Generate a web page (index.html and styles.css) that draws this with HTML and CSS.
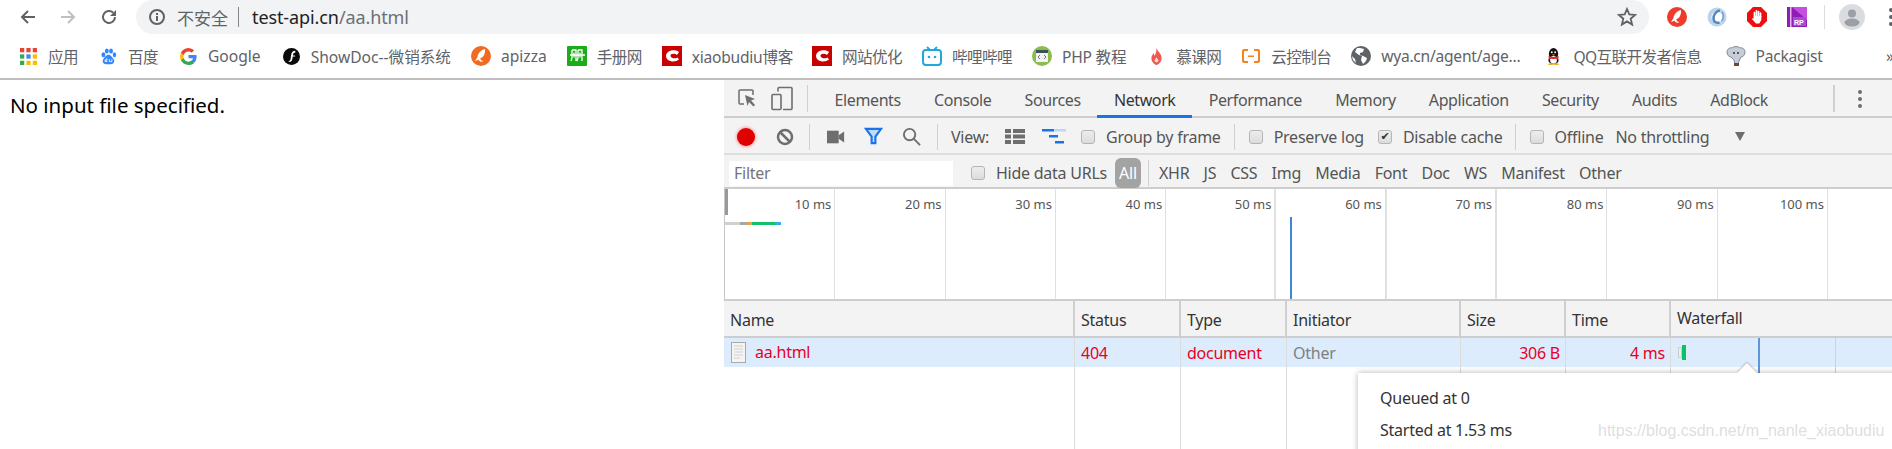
FILE: index.html
```html
<!DOCTYPE html>
<html lang="zh">
<head>
<meta charset="utf-8">
<title>aa.html</title>
<link rel="stylesheet" href="styles.css">
</head>
<body>
<header class="chrome">
  <div class="navbar">
    <svg class="nav-ic nav-back" viewBox="0 0 18 18"><path d="M16 9H3M9 3 3 9l6 6" fill="none" stroke="#5f6368" stroke-width="2"/></svg>
    <svg class="nav-ic nav-fwd" viewBox="0 0 18 18"><path d="M2 9h13M9 3l6 6-6 6" fill="none" stroke="#bdc1c6" stroke-width="2"/></svg>
    <svg class="nav-ic nav-reload" viewBox="0 0 18 18"><path d="M15 9a6 6 0 1 1-1.800-4.300" fill="none" stroke="#5f6368" stroke-width="2"/><path d="M16 2v6h-6z" fill="#5f6368"/></svg>
    <div class="omnibox">
      <svg class="info" viewBox="0 0 18 18"><circle cx="9" cy="9" r="7" fill="none" stroke="#5f6368" stroke-width="2"/><path d="M9 8v5M9 5v2" stroke="#5f6368" stroke-width="2"/></svg>
      <span class="insecure">不安全</span><span class="omni-sep"></span>
      <span class="url"><b>test-api.cn</b>/aa.html</span>
      <svg class="star" viewBox="0 0 20 20"><path d="m10 2 2.300 5.400 5.900.5-4.500 3.800 1.400 5.800-5.100-3.100-5.100 3.100 1.400-5.800L1.800 7.900l5.900-.5z" fill="none" stroke="#5f6368" stroke-width="1.800"/></svg>
    </div>
    <div class="exts">
      <svg class="ext" viewBox="0 0 20 20"><circle cx="10" cy="10" r="10" fill="#ee3b2b"/><path d="M14 3c-4 1-7 4-7.500 8L4 15l3.500-1.200c1 1.700 3 2.700 5 1.200-2 0-3.200-1-3.200-3 3 0 5.200-4.500 4.700-9z" fill="#fff"/></svg>
      <svg class="ext" viewBox="0 0 20 20"><circle cx="10" cy="10" r="7.500" fill="none" stroke="#bcd3ea" stroke-width="4"/><path d="M13 3.500C9 4 6 8 6.500 12c.4 3 3 4.500 6 3.500" fill="none" stroke="#4f88c4" stroke-width="2.500"/><path d="M15 5c2 3 1.500 7-.5 9" fill="none" stroke="#6d9fd1" stroke-width="1.500"/></svg>
      <svg class="ext" viewBox="0 0 20 20"><path d="M6 0h8l6 6v8l-6 6H6l-6-6V6z" fill="#ee0e0e"/><path d="M7.500 10V5.500M9.500 10V3.800M11.500 10V4.500M13.500 10V6" stroke="#fff" stroke-width="1.700" stroke-linecap="round"/><path d="M6.700 9h7.600v4l-2 3.500H9L5 12l1-1 .7.5z" fill="#fff"/></svg>
      <svg class="ext" viewBox="0 0 20 20"><path d="M0 0h20v20H0z" fill="#8e1cb5"/><path d="M5 0h15v13z" fill="#c44fe0"/><path d="M3 0h1.500v20H3z" fill="#e6b5f2"/><rect x="6" y="10" width="13" height="9" fill="#a94ad0"/><text x="7" y="18" class="rp">RP</text></svg>
      <span class="ext-sep"></span>
      <svg class="avatar" viewBox="0 0 26 26"><circle cx="13" cy="13" r="13" fill="#dadce0"/><circle cx="13" cy="9.500" r="4" fill="#9aa0a6"/><ellipse cx="13" cy="18.500" rx="7.500" ry="4" fill="#9aa0a6"/></svg>
      <svg class="menu" viewBox="0 0 4 20"><circle cx="2" cy="3" r="2" fill="#5f6368"/><circle cx="2" cy="10" r="2" fill="#5f6368"/><circle cx="2" cy="17" r="2" fill="#5f6368"/></svg>
    </div>
  </div>
  <nav class="bookmarks">
    <a class="bm bm-s bm-zh"><svg class="bi" viewBox="0 0 16 16"><g><rect x="0" y="0" width="4" height="4" fill="#ea4335"/><rect x="6" y="0" width="4" height="4" fill="#ea4335"/><rect x="12" y="0" width="4" height="4" fill="#ea4335"/><rect x="0" y="6" width="4" height="4" fill="#34a853"/><rect x="6" y="6" width="4" height="4" fill="#4285f4"/><rect x="12" y="6" width="4" height="4" fill="#fbbc05"/><rect x="0" y="12" width="4" height="4" fill="#34a853"/><rect x="6" y="12" width="4" height="4" fill="#fbbc05"/><rect x="12" y="12" width="4" height="4" fill="#fbbc05"/></g></svg>应用</a>
    <a class="bm bm-s bm-zh"><svg class="bi" viewBox="0 0 18 20"><g fill="#3385ff"><ellipse cx="3" cy="8" rx="2.300" ry="3"/><ellipse cx="7" cy="3.500" rx="2.300" ry="3"/><ellipse cx="12" cy="3.500" rx="2.300" ry="3"/><ellipse cx="16" cy="8" rx="2" ry="3"/><path d="M9 8c3 0 4 3 6 5 2 3 0 6-3 6H6c-3 0-5-3-3-6 2-2 3-5 6-5z"/></g><path d="M7 12v4H5v-2h2M10 13v3h3v-3" fill="none" stroke="#fff" stroke-width="1"/></svg>百度</a>
    <a class="bm bm-s"><svg class="bi" viewBox="0 0 18 18"><path d="M17.600 9.200c0-.6-.1-1.200-.2-1.800H9v3.400h4.800a4 4 0 0 1-1.800 2.700v2.200h2.900c1.700-1.600 2.700-3.900 2.700-6.500z" fill="#4285f4"/><path d="M9 18c2.400 0 4.500-.8 5.900-2.200L12 13.600c-.8.500-1.800.9-3 .9-2.300 0-4.300-1.600-5-3.700H1v2.300A9 9 0 0 0 9 18z" fill="#34a853"/><path d="M4 10.700a5.400 5.400 0 0 1 0-3.400V5H1a9 9 0 0 0 0 8z" fill="#fbbc05"/><path d="M9 3.600c1.300 0 2.500.5 3.400 1.300L15 2.400A9 9 0 0 0 1 5l3 2.300c.7-2.100 2.700-3.700 5-3.700z" fill="#ea4335"/></svg>Google</a>
    <a class="bm bm-s"><svg class="bi" viewBox="0 0 18 18"><circle cx="9" cy="9" r="9" fill="#0a0a0a"/><path d="M13 3c-3 0-4 2-4.500 5L8 12c-.3 1-1 2-2.500 2 2 1.500 4 .5 4.500-3l.3-2H13l-.5-1h-2l.3-1.500c.1-1 .8-1.500 2.200-1.500z" fill="#fff"/></svg>ShowDoc--微销系统</a>
    <a class="bm bm-l"><svg class="bi-l" viewBox="0 0 20 20"><circle cx="10" cy="10" r="10" fill="#f26a21"/><path d="M14 3c-4 1-7 4-7.500 8L4 15l3.500-1.200c1 1.700 3 2.700 5 1.200-2 0-3.200-1-3.200-3 3 0 5.200-4.500 4.700-9z" fill="#fff"/></svg>apizza</a>
    <a class="bm bm-l bm-zh"><svg class="bi-l" viewBox="0 0 20 20"><rect width="20" height="20" rx="1" fill="#1aad19"/><path d="M5 4h4v11M5 4v8l-1 3M11 4h4v11M11 4v8l-1 3M3 9h15M7 6.500v5M13 6.500v5" fill="none" stroke="#fff" stroke-width="1.300"/></svg>手册网</a>
    <a class="bm bm-l bm-t"><svg class="bi-l" viewBox="0 0 20 20"><rect width="20" height="20" fill="#c90000"/><path d="M17 6C14 3 5 3.500 4 9.500 4 16 13 17 17 13.500l-1.500-2c-2 1.500-6.500 1-7-1.500-.5-2.500 4.500-3 6.500-1z" fill="#fff"/></svg>xiaobudiu博客</a>
    <a class="bm bm-l bm-zh bm-x"><svg class="bi-l" viewBox="0 0 20 20"><rect width="20" height="20" fill="#c90000"/><path d="M17 6C14 3 5 3.500 4 9.500 4 16 13 17 17 13.500l-1.500-2c-2 1.500-6.500 1-7-1.500-.5-2.500 4.500-3 6.500-1z" fill="#fff"/></svg>网站优化</a>
    <a class="bm bm-l bm-zh"><svg class="bi-l" viewBox="0 0 20 20"><path d="M5 1l3 3M15 1l-3 3" stroke="#21a7dc" stroke-width="1.800"/><rect x="1" y="4" width="18" height="15" rx="3" fill="none" stroke="#21a7dc" stroke-width="2"/><circle cx="7" cy="11" r="1.300" fill="#21a7dc"/><circle cx="13" cy="11" r="1.300" fill="#21a7dc"/></svg>哔哩哔哩</a>
    <a class="bm bm-l bm-t"><svg class="bi-l" viewBox="0 0 20 20"><circle cx="10" cy="10" r="10" fill="#8dbb4c"/><rect x="4" y="4" width="12" height="12" fill="#f2f2f2"/><rect x="4" y="4" width="12" height="3" fill="#39505f"/><path d="m8 9-2 2 2 2m4-4 2 2-2 2" fill="none" stroke="#777" stroke-width="1"/></svg>PHP 教程</a>
    <a class="bm bm-s bm-zh"><svg class="bi" viewBox="0 0 16 20"><path d="M8 0c1 4 6 6 6 12 0 4-3 7-6 8-3-1-6-4-6-8 0-3 2-4 2-6 1 1 1 2 2 3 1-2 2-5 2-9z" fill="#ef5a50"/><path d="M8 11c1 2 3 3 2 5-1 1-3 1-4 0-1-2 1-3 2-5z" fill="#fbdcd8"/></svg>慕课网</a>
    <a class="bm bm-l bm-zh"><svg class="bi-l" viewBox="0 0 20 20"><path d="M7 3H3a2 2 0 0 0-2 2v10c0 1 1 2 2 2h4v-2H4a1 1 0 0 1-1-1V6a1 1 0 0 1 1-1h3zM13 3h4a2 2 0 0 1 2 2v10c0 1-1 2-2 2h-4v-2h3a1 1 0 0 0 1-1V6a1 1 0 0 0-1-1h-3zM7 9.500h6v1.500H7z" fill="#f5811f"/></svg>云控制台</a>
    <a class="bm bm-l bm-t"><svg class="bi-l" viewBox="0 0 20 20"><circle cx="10" cy="10" r="10" fill="#5f6368"/><path d="M6 2 4 6l4 3 3 1-1 4 2 4 3-3 1-3-4-2-3-1 0-2 3-1 1-3-4-1zM1 10l3 3 1 4-3-3z" fill="#fff"/></svg>wya.cn/agent/age...</a>
    <a class="bm bm-zh bm-qq"><svg class="bi" viewBox="0 0 16 20"><ellipse cx="8" cy="7" rx="5.500" ry="7" fill="#111"/><ellipse cx="8" cy="14" rx="6" ry="5" fill="#111"/><ellipse cx="8" cy="14" rx="4" ry="4.500" fill="#fff"/><path d="M2 9.500c4 1.500 8 1.500 12 0v2l-1 .5 0 2-2-1.500c-2 .5-4 .5-6 0l-2 1z" fill="#e32a26"/><circle cx="6" cy="5" r="1.100" fill="#fff"/><circle cx="10" cy="5" r="1.100" fill="#fff"/><path d="M6 7.500h4l-2 1.500z" fill="#f2b01e"/><ellipse cx="4.500" cy="19" rx="3" ry="1" fill="#f2b01e"/><ellipse cx="11.500" cy="19" rx="3" ry="1" fill="#f2b01e"/></svg>QQ互联开发者信息</a>
    <a class="bm bm-l bm-t bm-pk"><svg class="bi-l" viewBox="0 0 20 20"><path d="M1 6c0-3 3-5 5-4 2-2 6-2 8 0 2-1 5 1 5 4s-2 5-4 5l-2 4-1 3H9l-1-4-3-3C3 11 1 9 1 6z" fill="#c6ccd8" stroke="#6d7382" stroke-width=".8"/><circle cx="8" cy="7" r="1" fill="#333"/><circle cx="12" cy="7" r="1" fill="#333"/><path d="M8 17h5v3H8z" fill="#6b4a2b"/></svg>Packagist</a>
    <span class="more">»</span>
  </nav>
</header>
<main class="body">
  <section class="page"><p class="msg">No input file specified.</p></section>
  <section class="devtools">
    <div class="tabs">
      <svg class="dt-ic dt-inspect" viewBox="0 0 20 20"><path d="M7 16H3a1 1 0 0 1-1-1V3a1 1 0 0 1 1-1h12a1 1 0 0 1 1 1v4" fill="none" stroke="#6e6e6e" stroke-width="1.500"/><path d="m8 7 10 4-4 1.500 4 4.500-1.500 1.500L12 14l-1.500 4z" fill="#6e6e6e"/></svg>
      <svg class="dt-ic dt-device" viewBox="0 0 22 24"><path d="M7 5V2a1 1 0 0 1 1-1h12a1 1 0 0 1 1 1v20a1 1 0 0 1-1 1H12" fill="none" stroke="#6e6e6e" stroke-width="1.600"/><rect x="1" y="8" width="9" height="15" rx="1" fill="none" stroke="#6e6e6e" stroke-width="1.600"/></svg>
      <span class="vsep vsep-tabs"></span>
      <span class="tab">Elements</span><span class="tab">Console</span><span class="tab">Sources</span><span class="tab tab-on">Network</span><span class="tab">Performance</span><span class="tab">Memory</span><span class="tab">Application</span><span class="tab">Security</span><span class="tab">Audits</span><span class="tab">AdBlock</span>
      <span class="vsep vsep-end"></span>
      <svg class="dt-more" viewBox="0 0 4 20"><circle cx="2" cy="3" r="2" fill="#6e6e6e"/><circle cx="2" cy="10" r="2" fill="#6e6e6e"/><circle cx="2" cy="17" r="2" fill="#6e6e6e"/></svg>
    </div>
    <div class="bar">
      <span class="rec"></span>
      <svg class="b-clear" viewBox="0 0 18 18"><circle cx="9" cy="9" r="7" fill="none" stroke="#6e6e6e" stroke-width="2.500"/><path d="m4 4 10 10" stroke="#6e6e6e" stroke-width="2.500"/></svg>
      <span class="vsep vsep-a"></span>
      <svg class="b-cam" viewBox="0 0 20 14"><rect y="0" width="13" height="14" fill="#6e6e6e"/><path d="m13 5 6-4v12l-6-4z" fill="#6e6e6e"/></svg>
      <svg class="b-filter" viewBox="0 0 20 20"><path d="M2 2h16l-6 8v7H8v-7z" fill="#bfdcf8" stroke="#1a73e8" stroke-width="2.200"/></svg>
      <svg class="b-search" viewBox="0 0 20 20"><circle cx="8" cy="8" r="6" fill="none" stroke="#6e6e6e" stroke-width="2"/><path d="m12 12 7 7" stroke="#6e6e6e" stroke-width="2"/></svg>
      <span class="vsep vsep-b"></span>
      <span class="lbl">View:</span>
      <svg class="b-list" viewBox="0 0 20 15"><path d="M0 0h6v4H0zM8 0h12v4H8zM0 5.500h6v4H0zM8 5.500h12v4H8zM0 11h6v4H0zM8 11h12v4H8z" fill="#6e6e6e"/></svg>
      <svg class="b-wf" viewBox="0 0 24 15"><path d="M0 0h12v2.500H0zM7 6h9v2.500H7zM13 12h9v2.500h-9z" fill="#1a73e8"/><path d="M12 0h12v2.500H12z" fill="#bcd6f5"/></svg>
      <label class="chk chk-g"><i class="box"></i>Group by frame</label>
      <span class="vsep vsep-c"></span>
      <label class="chk chk-p"><i class="box"></i>Preserve log</label>
      <label class="chk chk-d"><i class="box box-on">✔</i>Disable cache</label>
      <span class="vsep vsep-d"></span>
      <label class="chk chk-o"><i class="box"></i>Offline</label>
      <span class="lbl lbl-t">No throttling</span>
      <span class="tri"></span>
    </div>
    <div class="filter">
      <span class="f-input">Filter</span>
      <label class="chk chk-h"><i class="box"></i>Hide data URLs</label>
      <span class="pill">All</span>
      <span class="vsep vsep-f"></span>
      <span class="ft">XHR</span><span class="ft">JS</span><span class="ft">CSS</span><span class="ft">Img</span><span class="ft">Media</span><span class="ft">Font</span><span class="ft">Doc</span><span class="ft">WS</span><span class="ft">Manifest</span><span class="ft">Other</span>
    </div>
    <div class="overview">
      <div class="ov-col">10 ms</div><div class="ov-col">20 ms</div><div class="ov-col">30 ms</div><div class="ov-col">40 ms</div><div class="ov-col ov-w">50 ms</div><div class="ov-col ov-w">60 ms</div><div class="ov-col ov-w">70 ms</div><div class="ov-col">80 ms</div><div class="ov-col">90 ms</div><div class="ov-col">100 ms</div><div class="ov-col ov-last"></div>
      <span class="ov-start"></span>
      <span class="ov-bar"><i class="s1"></i><i class="s2"></i><i class="s3"></i><i class="s4"></i><i class="s5"></i></span>
      <span class="ov-load"></span>
    </div>
    <div class="table">
      <div class="tr th"><div class="td">Name</div><div class="td">Status</div><div class="td">Type</div><div class="td">Initiator</div><div class="td">Size</div><div class="td">Time</div><div class="td td-wf">Waterfall</div></div>
      <div class="tr row">
        <div class="td err name"><svg class="doc" viewBox="0 0 15 21"><rect x=".5" y=".5" width="14" height="20" fill="#f4f4f4" stroke="#a9a9a9"/><path d="M3 4h9M3 7h9M3 10h9M3 13h9M3 16h6" stroke="#d0d0d0"/></svg>aa.html</div>
        <div class="td err">404</div><div class="td err">document</div><div class="td other">Other</div>
        <div class="td err num">306 B</div><div class="td err num">4 ms</div>
        <div class="td wf"><span class="wf-q"></span><span class="wf-g"></span></div>
      </div>
      <div class="tr fill"><div class="td"></div><div class="td"></div><div class="td"></div><div class="td"></div><div class="td"></div><div class="td"></div><div class="td"></div></div>
      <span class="wf-line"></span>
      <span class="wf-line2"></span>
      <div class="tip">
        <span class="tip-arrow"></span>
        <p>Queued at 0</p>
        <p>Started at 1.53 ms</p>
      </div>
      <span class="mark">https://blog.csdn.net/m_nanle_xiaobudiu</span>
    </div>
  </section>
</main>
</body>
</html>
```
FILE: styles.css
```css
*{box-sizing:border-box}
html,body{margin:0;height:449px;overflow:hidden;background:#fff}
body{font-family:"Noto Sans","Noto Sans CJK SC",sans-serif;color:#333}
p{margin:0}
.chrome{height:80px;border-bottom:2px solid #bdbdbd;background:#fff}
.navbar{height:34px;display:flex;align-items:center}
.nav-ic{width:18px;height:18px;flex:none}
.nav-back{margin-left:19px}
.nav-fwd{margin-left:22px}
.nav-reload{margin-left:23px}
.omnibox{margin-left:18px;width:1513px;height:34px;background:#f1f3f4;border-radius:17px;display:flex;align-items:center;padding-left:12px;flex:none}
.info{width:18px;height:18px;flex:none}
.insecure{margin-left:11px;font-size:17px;color:#5f6368;white-space:nowrap}
.omni-sep{width:1px;height:20px;background:#80868b;margin:0 13px 0 10px}
.url{font-size:18px;color:#6c7074;letter-spacing:-.1px}
.url b{font-weight:400;color:#202124}
.star{width:20px;height:20px;margin-left:auto;margin-right:12px}
.exts{flex:1;display:flex;align-items:center;min-width:0}
.ext{width:20px;height:20px;margin-left:20px;flex:none}
.ext:first-child{margin-left:18px}
.rp{font:700 7px "Liberation Sans",sans-serif;fill:#fff}
.ext-sep{width:1px;height:24px;background:#dadce0;margin-left:17px;flex:none}
.avatar{width:26px;height:26px;margin-left:14px;flex:none}
.menu{width:4px;height:20px;margin-left:24px;flex:none}
.bookmarks{height:44px;display:flex;align-items:center;padding-left:18px;gap:20px;position:relative;font-size:15.600px;color:#5f6368;white-space:nowrap}
.bm{display:flex;align-items:center;gap:11px}
.bm-l{gap:10px}
.bm-s{margin-left:2px}
.bm-zh{letter-spacing:-.6px}
.bm-t{letter-spacing:-.25px}
.bm-x{margin-left:-1px}
.bm-qq{margin-left:5px}
.bm-pk{margin-left:4px}
.bi{width:17px;height:17px;flex:none}
.bi-l{width:20px;height:20px;flex:none}
.more{position:absolute;left:1886px;top:11px}
.body{display:flex;height:369px}
.page{width:724px;flex:none}
.msg{font-size:20.500px;color:#000;margin:11px 0 0 10px;line-height:28px}
.devtools{flex:1;min-width:0;background:#fff;font-size:16px;color:#555;letter-spacing:-.25px}
.tabs{height:38px;background:#f3f3f3;border-bottom:2px solid #cdcdcd;display:flex;align-items:stretch;position:relative;padding-left:13px}
.dt-ic{align-self:center;flex:none}
.dt-inspect{width:20px;height:20px}
.dt-device{width:22px;height:27px;margin-left:14px}
.vsep{width:1px;background:#cfcfcf;align-self:center;flex:none}
.vsep-tabs{height:27px;margin:0 10px 0 14px}
.tab{padding:4px 16.600px 0;display:flex;align-items:center;font-size:16px;white-space:nowrap;letter-spacing:-.4px}
.tab-on{color:#333;box-shadow:inset 0 -3px 0 #1a73e8;margin-bottom:-2px;padding-bottom:2px}
.vsep-end{height:27px;width:2px;position:absolute;left:1109px;top:5px}
.dt-more{position:absolute;left:1134px;top:9px;width:4px;height:20px}
.bar{height:37px;background:#f3f3f3;border-bottom:2px solid #dedede;display:flex;align-items:center;padding:2px 0 0 13px;white-space:nowrap;font-size:16px}
.rec{width:18px;height:18px;border-radius:50%;background:#e00000;box-shadow:0 0 3px 1px #f4a0a0;flex:none}
.b-clear{width:18px;height:18px;margin-left:21px;flex:none}
.vsep-a{height:26px;margin-left:15px}
.b-cam{width:18px;height:14px;margin-left:17px;flex:none}
.b-filter{width:19px;height:19px;margin-left:19px;flex:none}
.b-search{width:19px;height:19px;margin-left:19px;flex:none}
.vsep-b{height:26px;margin-left:16px}
.lbl{margin-left:13px}
.b-list{width:20px;height:15px;margin-left:16px;flex:none}
.b-wf{width:24px;height:15px;margin-left:17px;flex:none}
.chk{display:flex;align-items:center;gap:11px}
.box{display:block;width:14px;height:14px;border:1px solid #b5b5b5;border-radius:3px;background:linear-gradient(#ededed,#dcdcdc);font:normal 11px/12px "DejaVu Sans",sans-serif;color:#333;text-align:center;flex:none}
.chk-g{margin-left:15px}
.vsep-c{height:26px;margin-left:13px}
.chk-p{margin-left:14px}
.chk-d{margin-left:14px}
.vsep-d{height:26px;margin-left:12px}
.chk-o{margin-left:14px}
.lbl-t{margin-left:12px}
.tri{width:0;height:0;border:5px solid transparent;border-top:9px solid #6e6e6e;border-bottom:0;margin-left:26px}
.filter{height:34px;background:#f3f3f3;border-bottom:2px solid #cdcdcd;display:flex;align-items:center;padding:4px 0 0 5px;white-space:nowrap;font-size:16px}
.f-input{width:224px;height:25px;background:#fff;color:#757575;padding-left:5px;line-height:24px;flex:none}
.chk-h{margin-left:18px}
.pill{background:#a3a3a3;color:#fff;border-radius:6px;width:26px;text-align:center;margin-left:8px;height:30px;line-height:30px;flex:none}
.vsep-f{height:26px;margin-left:7px;margin-right:10px}
.ft{margin-right:14.200px}
.overview{height:112px;display:grid;grid-template-columns:repeat(10,110.300px) 1fr;position:relative;border-left:1px solid #c6c6c6;border-bottom:2px solid #cdcdcd;font-size:13px;color:#555;letter-spacing:0}
.ov-col{border-right:1px solid #e0e0e0;text-align:right;padding:6px 3px 0 0;white-space:nowrap}
.ov-w{border-right-width:2px}
.ov-last{border:0}
.ov-start{position:absolute;left:0;top:0;width:3px;height:26px;background:#999}
.ov-bar{position:absolute;left:0;top:33px;height:3px;display:flex}
.ov-bar i{display:block;height:3px}
.s1{width:15px;background:#d0d0d0}
.s2{width:8px;background:#a8a8a8}
.s3{width:4px;background:#f2a33a}
.s4{width:23px;background:#13c168}
.s5{width:6px;background:#2eaef0}
.ov-load{position:absolute;left:564.500px;top:28px;width:2px;height:82px;background:#3f86d8}
.table{position:relative;height:148px;overflow:hidden;font-size:16px}
.tr{display:grid;grid-template-columns:351px 106px 106px 174px 105px 105px 1fr}
.td{padding:0 5px 0 6px;border-right:1px solid #dcdcdc;white-space:nowrap;overflow:hidden}
.td:last-child{border-right:0}
.th{height:37px;background:#f3f3f3;border-bottom:2px solid #cdcdcd;line-height:39px;color:#333}
.th .td{border-right:2px solid #cfcfcf}
.th .td-wf{border-right:0;line-height:35px}
.row{height:29px;background:#dcecfc;line-height:31px}
.err{color:#e8001f}
.other{color:#808080}
.num{text-align:right}
.name{display:flex;align-items:center;gap:9px;padding-left:7px}
.doc{width:15px;height:21px;flex:none}
.fill{height:83px}
.wf{display:flex;align-items:center;padding-left:7px;border:0}
.wf-q{width:4px;height:11px;background:#eee;border:1px solid #ccc}
.wf-g{width:4px;height:15px;background:#0bc164}
.wf-line{position:absolute;left:1034px;top:37px;width:2px;height:36px;background:#5e96db}
.wf-line2{position:absolute;left:1111px;top:37px;width:1px;height:36px;background:#c8d3e0}
.tip{position:absolute;left:634px;top:72px;width:600px;height:90px;background:#fff;box-shadow:0 0 6px rgba(0,0,0,.3);padding:9px 22px;font-size:16px;color:#333}
.tip p{height:32px;line-height:32px}
.tip-arrow{position:absolute;left:382px;top:-7px;width:14px;height:14px;background:#fff;transform:rotate(45deg);box-shadow:-1px -1px 2px rgba(0,0,0,.2)}
.mark{position:absolute;left:874px;top:121px;font:16px "Liberation Sans",sans-serif;letter-spacing:0;color:rgba(170,170,170,.4);white-space:nowrap}
```
